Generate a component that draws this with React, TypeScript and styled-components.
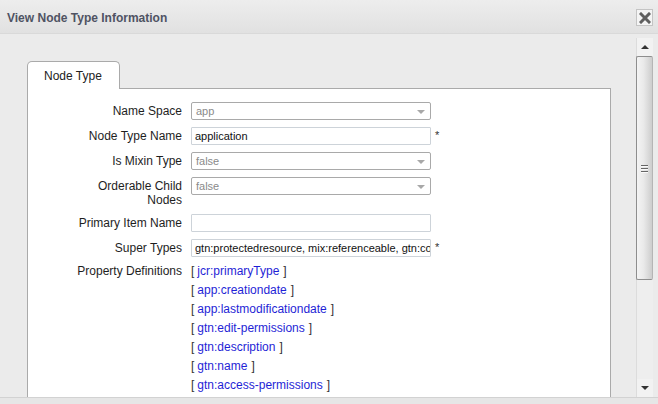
import React from "react";
import styled, { createGlobalStyle } from "styled-components";

const Global = createGlobalStyle`
  html, body { margin: 0; padding: 0; background: #ebebeb; }
  body { font-family: "Liberation Sans", Arial, sans-serif; overflow: hidden; }
`;

const Window = styled.div`
  width: 658px;
  height: 404px;
  display: flex;
  flex-direction: column;
  background: #ebebeb;
  overflow: hidden;
`;

const Header = styled.div`
  height: 33px;
  flex: none;
  display: flex;
  align-items: center;
  justify-content: space-between;
  padding: 0 5px 0 7px;
  background: linear-gradient(#ededed, #e1e1e1);
  border-bottom: 1px solid #d9d9d9;
`;

const Title = styled.div`
  font: bold 12px "Liberation Sans", Arial, sans-serif;
  color: #4f5363;
  margin-top: 2px;
`;

const CloseButton = styled.div`
  width: 15px;
  height: 15px;
  border: 1px solid #c4c4c4;
  background: #f4f4f4;
  display: flex;
  align-items: center;
  justify-content: center;
  margin-top: 2px;
`;

const Body = styled.div`
  flex: 1;
  display: flex;
  min-height: 0;
  overflow: hidden;
`;

const Content = styled.div`
  flex: 1;
  padding: 27px 25px 0 27px;
  overflow: hidden;
`;

const TabBar = styled.div`
  display: flex;
  margin-bottom: -1px;
  position: relative;
  z-index: 1;
`;

const Tab = styled.div`
  width: 93px;
  height: 28px;
  border: 1px solid #aaaaaa;
  border-bottom: none;
  border-radius: 5px 5px 0 0;
  background: #ffffff;
  font: 12px "Liberation Sans", Arial, sans-serif;
  color: #222;
  display: flex;
  align-items: center;
  padding: 1px 0 0 16px;
  box-sizing: border-box;
`;

const Panel = styled.div`
  background: #ffffff;
  border: 1px solid #aaaaaa;
  height: 400px;
  padding-top: 13px;
  box-sizing: border-box;
`;

const Form = styled.div`
  display: grid;
  grid-template-columns: 154px 240px auto;
  column-gap: 9px;
  row-gap: 7px;
  align-items: start;
`;

const Label = styled.div`
  font: 12px "Liberation Sans", Arial, sans-serif;
  color: #1e1e1e;
  text-align: right;
  line-height: 14px;
  padding-top: 2px;
`;

const SelectBox = styled.div`
  height: 18px;
  box-sizing: border-box;
  border: 1px solid #a9a9a9;
  border-radius: 2px;
  background: #fff;
  font: 11px "Liberation Sans", Arial, sans-serif;
  color: #8a8a8a;
  line-height: 16px;
  padding: 0 0 0 4px;
  display: flex;
  align-items: center;
  justify-content: space-between;
`;

const TextInput = styled.input`
  width: 240px;
  height: 18px;
  box-sizing: border-box;
  margin: 0;
  border: 1px solid #cdd3d9;
  border-radius: 1px;
  background: #fff;
  font: 11px "Liberation Sans", Arial, sans-serif;
  color: #111;
  padding: 0 0 0 3px;
  outline: none;
`;

const Arrow = styled.span`
  width: 0;
  height: 0;
  border-left: 4px solid transparent;
  border-right: 4px solid transparent;
  border-top: 4px solid #a8a8a8;
  margin: 2px 5px 0 0;
  flex: none;
`;

const Required = styled.span`
  font: 11px "Liberation Sans", Arial, sans-serif;
  color: #333;
  padding-top: 2px;
  margin-left: -5px;
`;

const LinkList = styled.div`
  display: flex;
  flex-direction: column;
  grid-column: 2 / 4;
  margin-top: -2px;
`;

const LinkRow = styled.div`
  font: 12px "Liberation Sans", Arial, sans-serif;
  line-height: 19px;
  color: #333;
  white-space: nowrap;
`;

const Link = styled.a`
  color: #1f1fd6;
  text-decoration: none;
  margin: 0 4px 0 3px;
`;

const PropLabel = styled(Label)`
  padding-top: 0;
  margin-top: -1px;
  line-height: 17px;
`;

const Scrollbar = styled.div`
  width: 17px;
  flex: none;
  margin: 4px 5px 0 0;
  display: flex;
  flex-direction: column;
  background: #eeeeee;
  border-left: 1px solid #dcdcdc;
  box-sizing: border-box;
`;

const ScrollButton = styled.div`
  height: 18px;
  flex: none;
  display: flex;
  align-items: center;
  justify-content: center;
  background: #f2f2f2;
`;

const Thumb = styled.div`
  height: 222px;
  flex: none;
  border: 1px solid #8e8e8e;
  border-right-color: #b5b5b5;
  border-radius: 2px;
  background: linear-gradient(90deg, #f4f4f4 0%, #e9e9e9 45%, #cdcdcd 100%);
  display: flex;
  align-items: center;
  justify-content: center;
  margin-left: -1px;
`;

const Track = styled.div`
  flex: 1;
`;

const Grip = styled.div`
  display: flex;
  flex-direction: column;
  gap: 2px;
`;

const GripLine = styled.div`
  width: 7px;
  height: 1px;
  background: #666;
  box-shadow: 0 1px 0 #fafafa;
`;

const Footer = styled.div`
  height: 6px;
  flex: none;
  background: #e6e6e6;
  border-top: 1px solid #d2d2d2;
`;

const TriUp = styled.span`
  width: 0;
  height: 0;
  border-left: 4px solid transparent;
  border-right: 4px solid transparent;
  border-bottom: 4px solid #333;
`;

const TriDown = styled.span`
  width: 0;
  height: 0;
  border-left: 4px solid transparent;
  border-right: 4px solid transparent;
  border-top: 4px solid #333;
`;

const links = [
  "jcr:primaryType",
  "app:creationdate",
  "app:lastmodificationdate",
  "gtn:edit-permissions",
  "gtn:description",
  "gtn:name",
  "gtn:access-permissions",
];

export default function App() {
  return (
    <>
      <Global />
      <Window>
        <Header>
          <Title>View Node Type Information</Title>
          <CloseButton>
            <svg width="12" height="12" viewBox="0 0 12 12">
              <path d="M2 2 L10 10 M10 2 L2 10" stroke="#5f5f5f" strokeWidth="3" strokeLinecap="square" />
            </svg>
          </CloseButton>
        </Header>
        <Body>
          <Content>
            <TabBar>
              <Tab>Node Type</Tab>
            </TabBar>
            <Panel>
              <Form>
                <Label>Name Space</Label>
                <SelectBox>
                  app<Arrow />
                </SelectBox>
                <span />

                <Label>Node Type Name</Label>
                <TextInput readOnly value="application" />
                <Required>*</Required>

                <Label>Is Mixin Type</Label>
                <SelectBox>
                  false<Arrow />
                </SelectBox>
                <span />

                <Label>
                  Orderable Child
                  <br />
                  Nodes
                </Label>
                <SelectBox>
                  false<Arrow />
                </SelectBox>
                <span />

                <Label>Primary Item Name</Label>
                <TextInput readOnly value="" />
                <span />

                <Label>Super Types</Label>
                <TextInput readOnly value="gtn:protectedresource, mix:referenceable, gtn:contentable" />
                <Required>*</Required>

                <PropLabel>Property Definitions</PropLabel>
                <LinkList>
                  {links.map((l) => (
                    <LinkRow key={l}>
                      [<Link href="#">{l}</Link>]
                    </LinkRow>
                  ))}
                </LinkList>
              </Form>
            </Panel>
          </Content>
          <Scrollbar>
            <ScrollButton>
              <TriUp />
            </ScrollButton>
            <Thumb>
              <Grip>
                <GripLine />
                <GripLine />
                <GripLine />
              </Grip>
            </Thumb>
            <Track />
            <ScrollButton>
              <TriDown />
            </ScrollButton>
          </Scrollbar>
        </Body>
        <Footer />
      </Window>
    </>
  );
}
